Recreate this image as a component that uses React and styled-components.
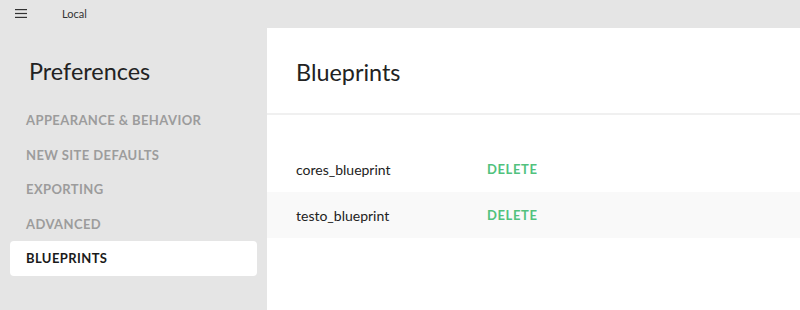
import React from 'react'
import styled, { createGlobalStyle } from 'styled-components';

const GlobalStyle = createGlobalStyle`
  html, body {
    margin: 0;
    padding: 0;
    width: 800px;
    height: 310px;
    overflow: hidden;
    font-family: Lato, "Open Sans", sans-serif;
    background: #e5e5e5;
  }
`;

const menu = [
    'Appearance & Behavior',
    'New Site Defaults',
    'Exporting',
    'Advanced',
    'Blueprints',
];

const blueprints = ['cores_blueprint', 'testo_blueprint'];

const App = () => {
    return (
        <Main>
            <GlobalStyle />
            <TitleBar>
                <Burger viewBox="0 0 12 9" aria-hidden="true">
                    <rect x="0" y="0" width="12" height="1.2" fill="#333" />
                    <rect x="0" y="3.9" width="12" height="1.2" fill="#333" />
                    <rect x="0" y="7.8" width="12" height="1.2" fill="#333" />
                </Burger>
                <AppName>Local</AppName>
            </TitleBar>
            <Body>
                <Sidebar>
                    <SideTitle>Preferences</SideTitle>
                    <Menu>
                        {menu.map((item) => (
                            <MenuItem key={item} active={item === 'Blueprints'}>{item}</MenuItem>
                        ))}
                    </Menu>
                </Sidebar>
                <Content>
                    <Header>
                        <PageTitle>Blueprints</PageTitle>
                    </Header>
                    <List>
                        {blueprints.map((name, i) => (
                            <Row key={name} striped={i % 2 === 1}>
                                <Name>{name}</Name>
                                <Delete>Delete</Delete>
                            </Row>
                        ))}
                    </List>
                </Content>
            </Body>
        </Main>
    )
};

const Main = styled.div`
  width: 800px;
  height: 310px;
  display: flex;
  flex-direction: column;
  background: #e5e5e5;
`;

const TitleBar = styled.div`
  height: 28px;
  display: flex;
  align-items: center;
  padding-left: 15px;
  flex-shrink: 0;
`;

const Burger = styled.svg`
  width: 12px;
  height: 9px;
  margin-top: -1px;
`;

const AppName = styled.span`
  margin-left: 35px;
  font-size: 11px;
  color: #333;
  margin-top: -1px;
`;

const Body = styled.div`
  flex: 1;
  display: flex;
`;

const Sidebar = styled.div`
  width: 267px;
  flex-shrink: 0;
  padding: 0 10px;
  box-sizing: border-box;
`;

const SideTitle = styled.h1`
  margin: 28px 0 0 19px;
  font-size: 23.4px;
  font-weight: 400;
  color: #222;
  line-height: 30px;
`;

const Menu = styled.div`
  margin-top: 17px;
  display: flex;
  flex-direction: column;
`;

const MenuItem = styled.div`
  height: 34.5px;
  line-height: 34.5px;
  padding-left: 16px;
  font-size: 13px;
  font-weight: 700;
  text-transform: uppercase;
  letter-spacing: 0.4px;
  border-radius: 4px;
  color: ${(p) => (p.active ? '#1a1a1a' : '#9c9c9c')};
  background: ${(p) => (p.active ? '#fff' : 'transparent')};
`;

const Content = styled.div`
  flex: 1;
  background: #fff;
  display: flex;
  flex-direction: column;
`;

const Header = styled.div`
  height: 85px;
  border-bottom: 2px solid #f0f0f0;
  display: flex;
  align-items: center;
  padding-left: 29px;
`;

const PageTitle = styled.h2`
  margin: 0 0 -2px 0;
  font-size: 23.4px;
  font-weight: 400;
  color: #222;
`;

const List = styled.div`
  margin-top: 31px;
`;

const Row = styled.div`
  height: 46px;
  display: flex;
  align-items: center;
  padding-left: 29px;
  background: ${(p) => (p.striped ? '#f9f9f9' : '#fff')};
`;

const Name = styled.span`
  width: 191px;
  font-size: 14px;
  color: #222;
`;

const Delete = styled.span`
  font-size: 13px;
  font-weight: 700;
  text-transform: uppercase;
  letter-spacing: 0.6px;
  color: #51c27d;
`;

export default App;
